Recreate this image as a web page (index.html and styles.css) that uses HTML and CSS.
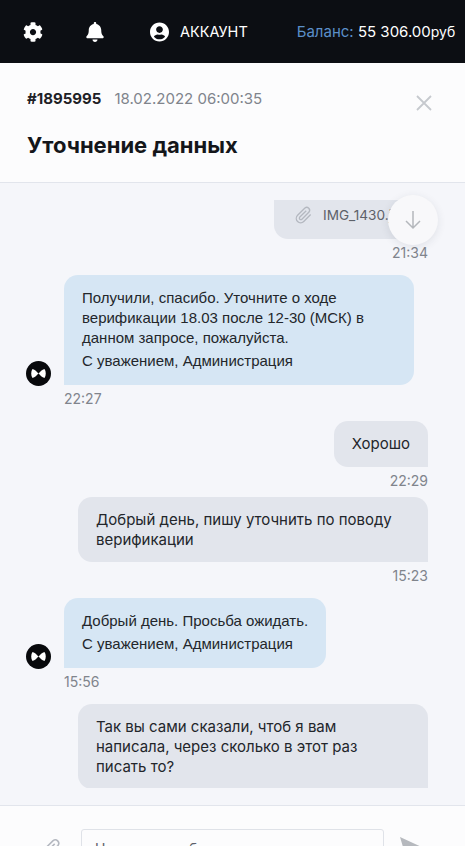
FILE: index.html
```html
<!DOCTYPE html>
<html lang="ru">
<head>
	<meta charset="UTF-8">
	<title>Уточнение данных</title>
	<link rel="stylesheet" href="styles.css">
</head>
<body>
	<header class="topbar">
		<svg class="ico-gear" viewBox="0 0 512 512"><path fill="#fff" d="M487.4 315.700l-42.600-24.600c4.300-23.200 4.300-47 0-70.200l42.600-24.600c4.900-2.800 7.100-8.600 5.500-14-11.100-35.600-30-67.800-54.700-94.600-3.800-4.100-10-5.100-14.800-2.300L380.800 110c-17.900-15.400-38.500-27.300-60.800-35.100V25.800c0-5.600-3.900-10.500-9.400-11.700-36.700-8.200-74.300-7.800-109.200 0-5.500 1.200-9.400 6.100-9.400 11.700V75c-22.200 7.900-42.800 19.800-60.800 35.100L88.700 85.500c-4.900-2.800-11-1.900-14.800 2.300-24.700 26.700-43.600 58.900-54.700 94.600-1.700 5.400.6 11.200 5.500 14L67.300 221c-4.300 23.200-4.300 47 0 70.200l-42.600 24.600c-4.900 2.800-7.100 8.600-5.500 14 11.100 35.600 30 67.800 54.700 94.600 3.800 4.100 10 5.100 14.800 2.300l42.600-24.600c17.900 15.400 38.500 27.300 60.800 35.100v49.200c0 5.600 3.900 10.500 9.400 11.700 36.700 8.200 74.300 7.800 109.200 0 5.500-1.200 9.400-6.100 9.400-11.700v-49.200c22.200-7.900 42.800-19.800 60.800-35.100l42.600 24.600c4.900 2.800 11 1.900 14.800-2.300 24.700-26.700 43.600-58.900 54.700-94.600 1.500-5.500-.7-11.300-5.600-14.100zM256 336c-44.100 0-80-35.900-80-80s35.900-80 80-80 80 35.900 80 80-35.900 80-80 80z"/></svg>
		<svg class="ico-bell" viewBox="0 0 448 512"><path fill="#fff" d="M224 512c35.300 0 64-28.700 64-64H160c0 35.300 28.700 64 64 64zm215.400-149.700c-19.300-20.800-55.500-52-55.500-154.300 0-77.700-54.500-139.900-127.900-155.200V32c0-17.700-14.300-32-32-32s-32 14.300-32 32v20.800C118.600 68.100 64.100 130.300 64.100 208c0 102.300-36.200 133.500-55.500 154.300-6 6.400-8.700 14.100-8.600 21.700.1 16.400 13 32 32.100 32h383.800c19.100 0 32-15.600 32.100-32 .1-7.600-2.600-15.300-8.600-21.700z"/></svg>
		<div class="account">
			<svg class="ico-user" viewBox="0 0 496 512"><path fill="#fff" d="M248 8C111 8 0 119 0 256s111 248 248 248 248-111 248-248S385 8 248 8zm0 96c48.600 0 88 39.400 88 88s-39.400 88-88 88-88-39.400-88-88 39.400-88 88-88zm0 344c-58.700 0-111.300-26.600-146.500-68.200 18.800-35.400 55.600-59.800 98.500-59.800 2.400 0 4.800.4 7.100 1.100 13 4.200 26.600 6.900 40.900 6.900 14.300 0 28-2.700 40.900-6.900 2.300-.7 4.700-1.100 7.100-1.100 42.900 0 79.700 24.400 98.500 59.800C359.300 421.400 306.700 448 248 448z"/></svg>
			<span>АККАУНТ</span>
		</div>
		<div class="balance"><span class="balance-label">Баланс:</span> <span class="balance-sum">55 306.00</span><span class="balance-cur">руб</span></div>
	</header>

	<section class="ticket">
		<div class="ticket-info">
			<div class="ticket-meta"><b>#1895995</b><span>18.02.2022 06:00:35</span></div>
			<h1>Уточнение данных</h1>
		</div>
		<svg class="ico-close" viewBox="0 0 16 16"><path d="M1 1l14 14M15 1L1 15" stroke="#c6c9ce" stroke-width="1.800" fill="none"/></svg>
	</section>

	<main class="chat">
		<div class="chat-scroll">
			<div class="msg msg-user">
				<div class="bubble bubble-file">
					<svg class="ico-clip" viewBox="0 0 24 24"><path d="M20 11.500l-8.300 8.300a5.200 5.200 0 0 1-7.400-7.400l8.800-8.800a3.500 3.500 0 0 1 4.900 4.900l-8.500 8.500a1.700 1.700 0 0 1-2.500-2.500l7.700-7.600" stroke="#b4b8c0" stroke-width="1.600" fill="none"/></svg>
					<span>IMG_1430.jpg</span>
				</div>
				<time>21:34</time>
			</div>

			<div class="msg msg-admin">
				<div class="msg-row">
					<div class="avatar"><svg viewBox="0 0 25 25"><path fill="#fff" d="M6.500 8c2.500.4 4.300 3 6 4.500-1.700 1.500-3.500 4.100-6 4.500-1.700-2.500-1.700-6.500 0-9zM18.500 8c-2.500.4-4.300 3-6 4.500 1.700 1.500 3.500 4.100 6 4.500 1.700-2.500 1.700-6.500 0-9z"/></svg></div>
					<div class="bubble bubble-wide">
						<p>Получили, спасибо. Уточните о ходе верификации 18.03 после 12-30 (МСК) в данном запросе, пожалуйста.</p>
						<p class="sign">С уважением, Администрация</p>
					</div>
				</div>
				<time>22:27</time>
			</div>

			<div class="msg msg-user">
				<div class="bubble"><p>Хорошо</p></div>
				<time>22:29</time>
			</div>

			<div class="msg msg-user">
				<div class="bubble bubble-full"><p>Добрый день, пишу уточнить по поводу верификации</p></div>
				<time>15:23</time>
			</div>

			<div class="msg msg-admin">
				<div class="msg-row">
					<div class="avatar"><svg viewBox="0 0 25 25"><path fill="#fff" d="M6.500 8c2.500.4 4.300 3 6 4.500-1.700 1.500-3.500 4.100-6 4.500-1.700-2.500-1.700-6.500 0-9zM18.500 8c-2.500.4-4.300 3-6 4.500 1.700 1.500 3.500 4.100 6 4.500 1.700-2.500 1.700-6.500 0-9z"/></svg></div>
					<div class="bubble">
						<p>Добрый день. Просьба ожидать.</p>
						<p class="sign">С уважением, Администрация</p>
					</div>
				</div>
				<time>15:56</time>
			</div>

			<div class="msg msg-user">
				<div class="bubble bubble-full"><p>Так вы сами сказали, чтоб я вам написала, через сколько в этот раз писать то?</p></div>
				<time>15:58</time>
			</div>
		</div>
		<button class="to-bottom"><svg viewBox="0 0 20 20"><path d="M10 1v17M3 11l7 7 7-7" stroke="#b4b7bc" stroke-width="1.500" fill="none"/></svg></button>
	</main>

	<footer class="composer">
		<svg class="ico-clip-big" viewBox="0 0 24 24"><path d="M20 11.500l-8.300 8.300a5.200 5.200 0 0 1-7.400-7.400l8.800-8.800a3.500 3.500 0 0 1 4.900 4.900l-8.500 8.500a1.700 1.700 0 0 1-2.500-2.500l7.700-7.600" stroke="#b4b8c0" stroke-width="1.600" fill="none"/></svg>
		<div class="input">Написать сообщение</div>
		<svg class="ico-send" viewBox="0 0 26 26"><path fill="#b6b9be" d="M0 0l26 12L0 24l3-10 11-2-11-2z"/></svg>
	</footer>
</body>
</html>
```

FILE: styles.css
```css
* {
	box-sizing: border-box;
	padding: 0;
	margin: 0;
}
html, body {
	height: 100%;
	overflow: hidden;
}
body {
	display: flex;
	flex-direction: column;
	font-family: Inter, "Liberation Sans", sans-serif;
	color: #23262b;
	background: #f5f6fa;
}

/* top bar */
.topbar {
	flex: none;
	display: flex;
	align-items: center;
	height: 63px;
	padding-left: 23px;
	background: #0c0e13;
	color: #fff;
	font-size: 15px;
}
.ico-gear {
	width: 20px;
	height: 20px;
	margin-right: 43px;
}
.ico-bell {
	width: 18px;
	height: 20px;
	margin-right: 46px;
}
.account {
	display: flex;
	align-items: center;
	gap: 11px;
	margin-right: 49px;
	font-size: 14.500px;
}
.ico-user {
	width: 19px;
	height: 20px;
}
.balance {
	white-space: nowrap;
}
.balance-label {
	color: #5b8fc9;
}
.balance-cur {
	font-size: 14px;
}

/* ticket head */
.ticket {
	flex: none;
	display: flex;
	justify-content: space-between;
	height: 120px;
	padding: 27px 33px 0 27px;
	background: #fcfcfd;
	border-bottom: 1px solid #e2e5ec;
}
.ticket-meta {
	display: flex;
	gap: 13px;
	font-size: 15px;
	line-height: 17px;
	color: #80848c;
}
.ticket-meta b {
	color: #1e2126;
	font-weight: 700;
}
.ticket h1 {
	margin-top: 24px;
	font-size: 22px;
	line-height: 28px;
	font-weight: 700;
	color: #14161a;
}
.ico-close {
	width: 16px;
	height: 16px;
	margin-top: 5px;
}

/* messages */
.chat {
	flex: 1;
	min-height: 0;
	position: relative;
	padding: 17px 37px 17px 26px;
}
.chat-scroll {
	height: 100%;
	overflow: hidden;
}
.msg {
	display: flex;
	flex-direction: column;
	margin-bottom: 14px;
}
.msg-user {
	align-items: flex-end;
}
.msg-user + .msg-user {
	margin-top: -6px;
}
.msg-row {
	display: flex;
	align-items: flex-end;
	gap: 13px;
}
.bubble {
	padding: 13px 18px;
	border-radius: 14px;
	line-height: 20px;
}
.msg-user .bubble {
	background: #e2e5ec;
	border-bottom-right-radius: 0;
	font-size: 15px;
}
.msg-admin .bubble {
	padding-bottom: 14px;
	background: #d6e6f4;
	border-bottom-left-radius: 0;
	font-family: "Liberation Sans", Arial, sans-serif;
	font-size: 15px;
}
.sign {
	margin-top: 3px;
}
.bubble-wide {
	width: 350px;
}
.msg-user .bubble-full {
	width: 350px;
	padding-bottom: 12px;
}
.bubble-full p {
	max-width: 298px;
}
.msg-user .bubble-file {
	display: flex;
	align-items: center;
	gap: 9px;
	width: 154px;
	height: 39px;
	padding: 0 0 10px 20px;
	border-radius: 0 0 0 14px;
	color: #5d6169;
	font-size: 13.600px;
	white-space: nowrap;
	overflow: hidden;
}
.ico-clip {
	flex: none;
	width: 20px;
	height: 20px;
}
.msg time {
	display: block;
	margin-top: 5px;
	font-size: 14px;
	line-height: 17px;
	color: #80848c;
}
.msg-admin time {
	margin-left: 38px;
}
.avatar {
	flex: none;
	width: 25px;
	height: 25px;
	margin-bottom: -1px;
	border-radius: 50%;
	background: #08090c;
}
.avatar svg {
	display: block;
}

/* floats over the list */
.to-bottom {
	position: absolute;
	top: 12px;
	right: 27px;
	width: 50px;
	height: 50px;
	border: 0;
	border-radius: 50%;
	background: #f8f8fa;
	box-shadow: 0 2px 8px rgba(40, 50, 70, .1);
}
.to-bottom svg {
	display: block;
	width: 20px;
	height: 20px;
	margin: 0 auto;
}

/* composer */
.composer {
	flex: none;
	display: flex;
	align-items: flex-start;
	height: 41px;
	overflow: hidden;
	padding-top: 23px;
	background: #fcfcfd;
	border-top: 1px solid #e2e5ec;
}
.ico-clip-big {
	flex: none;
	width: 24px;
	height: 24px;
	margin: 8px 17px 0 40px;
}
.input {
	flex: none;
	width: 303px;
	height: 50px;
	padding: 9px 13px;
	border: 1px solid #dfe2e8;
	border-radius: 3px;
	font-size: 14px;
	line-height: 20px;
	color: #5d6169;
}
.ico-send {
	flex: none;
	width: 26px;
	height: 26px;
	margin: 8px 0 0 16px;
}
```
